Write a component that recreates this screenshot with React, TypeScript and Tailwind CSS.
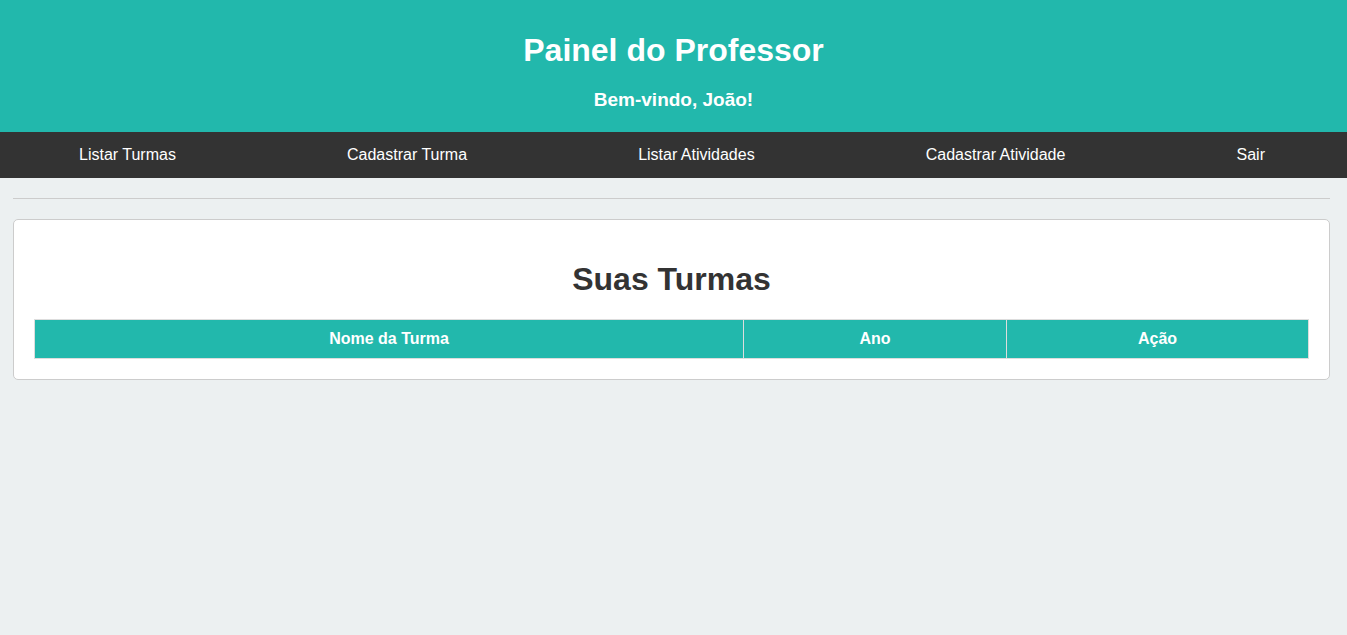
import React from "react";

const links = [
  "Listar Turmas",
  "Cadastrar Turma",
  "Listar Atividades",
  "Cadastrar Atividade",
  "Sair",
];

const App = () => {
  return (
    <div className="min-h-[635px] bg-[#ecf0f1] font-['Liberation_Sans',Arial,sans-serif] text-[#333]">
      <header className="flex flex-col items-center bg-[#22b8ac] pt-[32px] pb-[21px] text-white">
        <h1 className="text-[32px] font-bold leading-[37px]">
          Painel do Professor
        </h1>
        <h3 className="mt-[20px] text-[19px] font-bold leading-[22px]">
          Bem-vindo, João!
        </h3>
      </header>
      <nav className="flex justify-between bg-[#333] py-[14px] pl-[79px] pr-[82px]">
        {links.map((l) => (
          <a
            key={l}
            href="#"
            className="text-[16px] leading-[18px] text-white"
          >
            {l}
          </a>
        ))}
      </nav>
      <main className="ml-[13px] mr-[17px] pt-[20px]">
        <hr className="border-t border-[#ccc]" />
        <section className="mt-[20px] rounded-[5px] border border-[#ccc] bg-white p-[20px]">
          <h2 className="mt-[21px] mb-[21px] text-center text-[32px] font-bold leading-[37px] text-[#333]">
            Suas Turmas
          </h2>
          <table className="w-full border-collapse">
            <thead>
              <tr className="bg-[#22b8ac] text-white">
                <th className="w-[709px] border border-[#ddd] py-[10px] text-[16px] font-bold leading-[18px]">
                  Nome da Turma
                </th>
                <th className="w-[263px] border border-[#ddd] py-[10px] text-[16px] font-bold leading-[18px]">
                  Ano
                </th>
                <th className="border border-[#ddd] py-[10px] text-[16px] font-bold leading-[18px]">
                  Ação
                </th>
              </tr>
            </thead>
            <tbody></tbody>
          </table>
        </section>
      </main>
    </div>
  );
};

export default App;
